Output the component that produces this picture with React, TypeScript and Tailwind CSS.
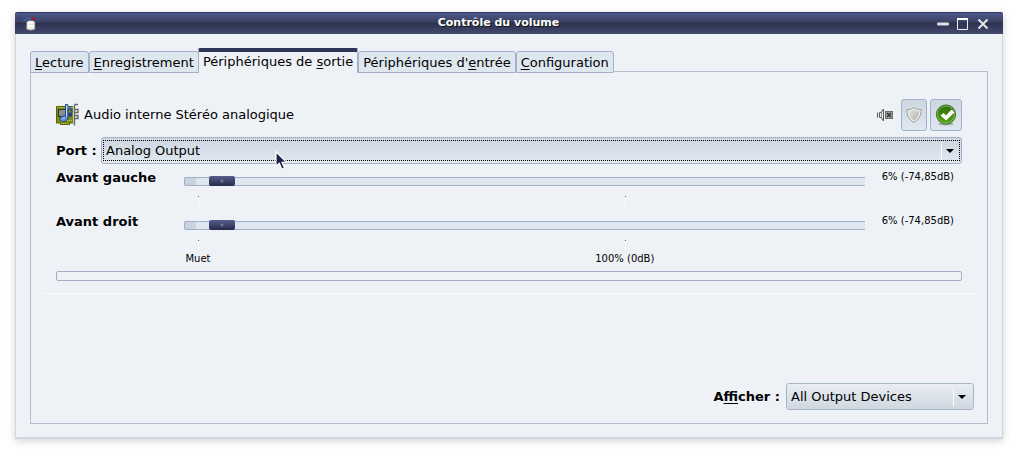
import { useState, type ReactNode } from "react";

interface TabItem {
  id: string;
  label: ReactNode;
}

// Shortcut letter inside a label
function Key({ children }: { children: ReactNode }) {
  return <u className="decoration-1 underline-offset-2">{children}</u>;
}

const TABS: TabItem[] = [
  { id: "playback", label: <><Key>L</Key>ecture</> },
  { id: "recording", label: <><Key>E</Key>nregistrement</> },
  { id: "output", label: <>Périphériques de <Key>s</Key>ortie</> },
  { id: "input", label: <>Périphériques d'<Key>e</Key>ntrée</> },
  { id: "config", label: <><Key>C</Key>onfiguration</> },
];

// The sliders go above 100%, up to +11dB
const MAX_VOLUME = 153;
const MARKS = [
  { value: 0, label: "Muet" },
  { value: 100, label: "100% (0dB)" },
];

function markLeft(value: number) {
  return { left: `${(value / MAX_VOLUME) * 100}%` };
}

function AppIcon() {
  return (
    <svg width="14" height="14" viewBox="0 0 14 14">
      <path d="M0 4.500C2 2 5 .800 8.500 1.800" fill="none" stroke="#3465a4" strokeWidth="1.500" />
      <path d="M8.500 .500h2.200v2.500H8.500z" fill="#d40000" />
      <path d="M3.500 5.500c0-2.500 8.500-2.500 8.500 0v6c0 2.300-8.500 2.300-8.500 0z" fill="#e4e4e0" stroke="#77797a" strokeWidth=".7" />
      <path d="M5 4.500h5.500v2.300H5zM4.800 8h6v2.500h-6z" fill="#fff" />
    </svg>
  );
}

function SoundCardIcon() {
  return (
    <svg width="24" height="24" viewBox="0 0 24 24">
      <path d="M.500 3.500h18v16.500h-5v1.500h-9V20h-4z" fill="#7d8a0f" stroke="#55620a" />
      <path d="M1.500 4.500h16" stroke="#a4b02c" />
      <rect x="2.500" y="6.500" width="7" height="7" fill="#8a8c8b" stroke="#2f3231" />
      <path d="M12.500 9.500h3.500v4h-3.500z" fill="#24408a" />
      <path d="M11 17.500h5M5 20.500h8" stroke="#c2cb4a" strokeDasharray="1 1" />
      <path d="M18.500 1.500v21M18.500 1.500H22M19 6.500h3v3h-3M19 12.500h3v3h-3" fill="none" stroke="#62656a" strokeWidth="1.300" />
      <path d="M17.500 3v19" stroke="#c5c8c4" strokeWidth="1" />
      <path
        d="M9.500 1.500h2c.500 2.800 4.500 2.500 4.500 7-1.500-2.300-3-2.800-4-2.800v8.800c0 4.500-7.500 5.500-8 2-.200-2.800 3-4 5.500-3.500z"
        fill="#5b8fd0"
        stroke="#1f4690"
      />
      <path d="M10.500 2.500v11M6 16.500c.500-1 2-1.500 3-1.500" fill="none" stroke="#c9dcf4" />
    </svg>
  );
}

function MuteIcon() {
  return (
    <svg width="16" height="16" viewBox="0 0 16 16">
      <path d="M.500 5.500v5M2.500 5.500h1.500L6.500 2v12L4 10.500H2.500z" fill="#e8e8e4" stroke="#5a5c58" />
      <path d="M4.500 5v6" stroke="#8b8d89" />
      <rect x="8.500" y="4.500" width="7" height="7" fill="#a0a29e" stroke="#6e706c" />
      <path d="M10 6l4 4M14 6l-4 4" stroke="#30332f" strokeWidth="1.500" />
    </svg>
  );
}

function ShieldIcon() {
  return (
    <svg width="16" height="16" viewBox="0 0 16 16">
      <defs>
        <linearGradient id="shield" x1="0" y1="0" x2="1" y2="1">
          <stop offset="0" stopColor="#e6e6e3" />
          <stop offset="1" stopColor="#adafab" />
        </linearGradient>
      </defs>
      <path
        d="M8 .600C6 2.300 3.500 2.800.800 2.600 1 8.500 3.200 13 8 15.400 12.800 13 15 8.500 15.200 2.600 12.500 2.800 10 2.300 8 .600z"
        fill="#f1f1ef"
        stroke="#8e908c"
        strokeWidth=".9"
      />
      <path d="M8 2.500C6.500 3.600 4.500 4 2.500 4 3 8.500 5 12 8 13.700 11 12 13 8.500 13.500 4 11.500 4 9.500 3.600 8 2.500z" fill="url(#shield)" />
    </svg>
  );
}

function CheckIcon() {
  return (
    <svg width="22" height="22" viewBox="0 0 22 22">
      <defs>
        <linearGradient id="check" x1="0" y1="0" x2="0" y2="1">
          <stop offset="0" stopColor="#2f6b0c" />
          <stop offset="1" stopColor="#55a513" />
        </linearGradient>
      </defs>
      <ellipse cx="11" cy="20" rx="8" ry="1.500" fill="#a4adb2" />
      <circle cx="11" cy="10.500" r="9.600" fill="url(#check)" stroke="#2c5c12" strokeWidth=".8" />
      <circle cx="11" cy="10.500" r="8.500" fill="none" stroke="#8cc763" strokeWidth=".8" />
      <path d="M5.500 11.500L8.500 9l2.500 2.500L16.500 5.500 19.500 8.500 11 16.500z" fill="#fff" />
    </svg>
  );
}

function PointerIcon() {
  return (
    <svg width="13" height="20" viewBox="0 0 13 20" className="pointer-events-none absolute top-[14px] left-[174px]">
      <path d="M1 .800v14.500l3.300-3 2.500 5.900 2.700-1.200L7 11.300h4.500z" fill="#1c2244" stroke="#fff" strokeWidth="1.200" />
    </svg>
  );
}

interface DropDownProps {
  id: string;
  options: string[];
  focused?: boolean;
}

function DropDown({ id, options, focused }: DropDownProps) {
  return (
    <>
      <select
        id={id}
        className={
          focused
            ? "h-[27px] w-full appearance-none rounded-[3px] border border-[#a3b0cb] bg-linear-to-b from-[#cdd6df] to-[#e0e9f0] pr-8 pl-1 outline-none"
            : "h-[27px] w-full appearance-none rounded-[3px] border border-[#a9b6c6] bg-linear-to-b from-[#e9eef3] to-[#cfd7e0] pr-8 pl-1 outline-none"
        }
      >
        {options.map((option) => (
          <option key={option}>{option}</option>
        ))}
      </select>
      {focused && (
        <span className="pointer-events-none absolute inset-x-[2px] inset-y-[3px] border border-dotted border-black" />
      )}
      <span className="pointer-events-none absolute inset-y-1 right-[8px] flex items-center gap-[4px]">
        <span className="h-[18px] w-px bg-white" />
        <svg width="8" height="4" viewBox="0 0 8 4">
          <path d="M0 0h8L4 4z" fill="#000" />
        </svg>
      </span>
    </>
  );
}

function ChannelSlider({ id, name }: { id: string; name: string }) {
  const [volume, setVolume] = useState(5.5);

  return (
    <div className="flex h-[38px] items-start">
      <label htmlFor={id} className="w-32 shrink-0 leading-5 font-bold">
        {name}
      </label>
      <div className="flex-1 pt-2">
        <input
          id={id}
          type="range"
          min={0}
          max={MAX_VOLUME}
          step={0.1}
          value={volume}
          onChange={(e) => setVolume(Number(e.target.value))}
          className="block h-[10px] w-full appearance-none bg-transparent outline-none [&::-webkit-slider-runnable-track]:h-[9px] [&::-webkit-slider-runnable-track]:rounded-l-[2px] [&::-webkit-slider-runnable-track]:border-y [&::-webkit-slider-runnable-track]:border-l [&::-webkit-slider-runnable-track]:border-[#a3b0cb] [&::-webkit-slider-runnable-track]:bg-[linear-gradient(to_right,#c8d3df_11px,#dfe7ee_11px)] [&::-webkit-slider-thumb]:-mt-[2px] [&::-webkit-slider-thumb]:h-[10px] [&::-webkit-slider-thumb]:w-[26px] [&::-webkit-slider-thumb]:appearance-none [&::-webkit-slider-thumb]:rounded-[2px] [&::-webkit-slider-thumb]:bg-[radial-gradient(circle,#6d7599_1px,transparent_2px),linear-gradient(#565f8c,#262b4a)]"
        />
        <div className="px-[14px] pt-[10px]">
          <div className="relative h-[10px]">
            {MARKS.map((mark) => (
              <span
                key={mark.value}
                className="absolute top-0 h-[10px] w-px bg-[linear-gradient(#4d6078_1px,#fff_1px)]"
                style={markLeft(mark.value)}
              />
            ))}
          </div>
        </div>
      </div>
      <output htmlFor={id} className="w-[97px] shrink-0 pr-2 text-right text-[10px] leading-[18px]">
        {Math.round(volume)}% (-74,85dB)
      </output>
    </div>
  );
}

function TitleBar() {
  return (
    <header className="flex h-[22px] items-center rounded-t-[2px] border-t border-[#2f3765] bg-[linear-gradient(#4c568a,#3d4466_40%,#2d324d_50%,#434a70)]">
      <div className="w-[45px] shrink-0 pl-2">
        <AppIcon />
      </div>
      <h1 className="flex-1 pb-[2px] text-center text-[11px] leading-4 font-bold text-white [text-shadow:1px_1px_0_#111]">
        Contrôle du volume
      </h1>
      <div className="flex w-[66px] shrink-0 items-center gap-2">
        <button type="button" aria-label="Réduire">
          <svg width="12" height="12" viewBox="0 0 12 12" className="block">
            <rect y="4.500" width="12" height="3" rx="1" fill="#dcdee4" />
          </svg>
        </button>
        <button type="button" aria-label="Agrandir">
          <svg width="12" height="12" viewBox="0 0 12 12" className="block">
            <path d="M.500 1v10.500h10V1" fill="none" stroke="#eceef2" />
            <path d="M0 1h11" stroke="#fff" strokeWidth="2" />
          </svg>
        </button>
        <button type="button" aria-label="Fermer">
          <svg width="12" height="12" viewBox="0 0 12 12" className="block">
            <path d="M1.500 1.500l9 9M10.500 1.500l-9 9" stroke="#e6e8ec" strokeWidth="2" />
          </svg>
        </button>
      </div>
    </header>
  );
}

function OutputDevice() {
  return (
    <section className="border-b border-white px-3 pb-3">
      <div className="flex h-8 items-center">
        <SoundCardIcon />
        <h2 className="flex-1 pl-1">Audio interne Stéréo analogique</h2>
        <button type="button" aria-label="Couper le son" className="mr-2">
          <MuteIcon />
        </button>
        <button
          type="button"
          aria-label="Verrouiller les canaux"
          className="mr-[3px] flex h-8 w-[26px] items-center justify-center rounded-[3px] border border-[#a3b0cb] bg-linear-to-b from-[#cdd6df] to-[#dfe8ef]"
        >
          <ShieldIcon />
        </button>
        <button
          type="button"
          aria-label="Définir par défaut"
          className="flex size-8 items-center justify-center rounded-[3px] border border-[#a3b0cb] bg-linear-to-b from-[#cdd6df] to-[#dfe8ef]"
        >
          <CheckIcon />
        </button>
      </div>

      <div className="mt-[6px] flex items-center">
        <label htmlFor="port" className="w-[45px] shrink-0 font-bold whitespace-nowrap">
          Port :
        </label>
        <div className="relative flex-1">
          <DropDown id="port" options={["Analog Output"]} focused />
          <PointerIcon />
        </div>
      </div>

      <div className="mt-1 flex flex-col gap-[6px]">
        <ChannelSlider id="left" name="Avant gauche" />
        <ChannelSlider id="right" name="Avant droit" />
      </div>

      {/* Scale labels, shared by both channels */}
      <div className="mt-[3px] mr-[97px] ml-32 px-[14px]">
        <div className="relative h-3 text-[10px] leading-3">
          {MARKS.map((mark) => (
            <span
              key={mark.value}
              className="absolute -translate-x-1/2 whitespace-nowrap"
              style={markLeft(mark.value)}
            >
              {mark.label}
            </span>
          ))}
        </div>
      </div>

      {/* Peak meter */}
      <div className="mt-[6px] h-[10px] rounded-[2px] border border-[#a3b0cb]" />
    </section>
  );
}

export default function App() {
  const [activeTab, setActiveTab] = useState("output");

  return (
    <div className="flex min-h-screen flex-col bg-white px-[15px] pt-3 pb-[18px] font-['DejaVu_Sans',sans-serif] text-[13px] leading-4 text-black">
      <div className="flex flex-1 flex-col rounded-[2px] shadow-[0_2px_8px_rgba(0,0,0,0.18)]">
        <TitleBar />
        <main className="flex flex-1 flex-col border-x border-b-2 border-[#cdd8e2] bg-[#eef2f7] px-[14px] pt-[14px] pb-[13px]">
          <div role="tablist" className="relative -mb-[2px] flex items-end">
            {TABS.map((tab) => (
              <button
                key={tab.id}
                type="button"
                role="tab"
                aria-selected={tab.id === activeTab}
                onClick={() => setActiveTab(tab.id)}
                className={
                  tab.id === activeTab
                    ? "-ml-px h-[25px] rounded-t-[2px] border-x border-t-4 border-x-[#a3b0cb] border-t-[#2e3558] bg-[#eef2f7] px-1 pb-px"
                    : "h-[22px] rounded-t-[3px] border border-[#a3b0cb] bg-[#dfe7ee] px-1 pt-[2px]"
                }
              >
                {tab.label}
              </button>
            ))}
          </div>

          <div
            role="tabpanel"
            className="flex flex-1 flex-col justify-between border border-[#b3bfcc] px-[13px] pt-[27px] pb-[13px]"
          >
            <OutputDevice />
            <div className="flex items-center justify-end gap-[6px]">
              <label htmlFor="show" className="font-bold">
                A<Key>ffi</Key>cher :
              </label>
              <div className="relative w-[188px]">
                <DropDown id="show" options={["All Output Devices", "Hardware Output Devices", "Virtual Output Devices"]} />
              </div>
            </div>
          </div>
        </main>
      </div>
    </div>
  );
}
